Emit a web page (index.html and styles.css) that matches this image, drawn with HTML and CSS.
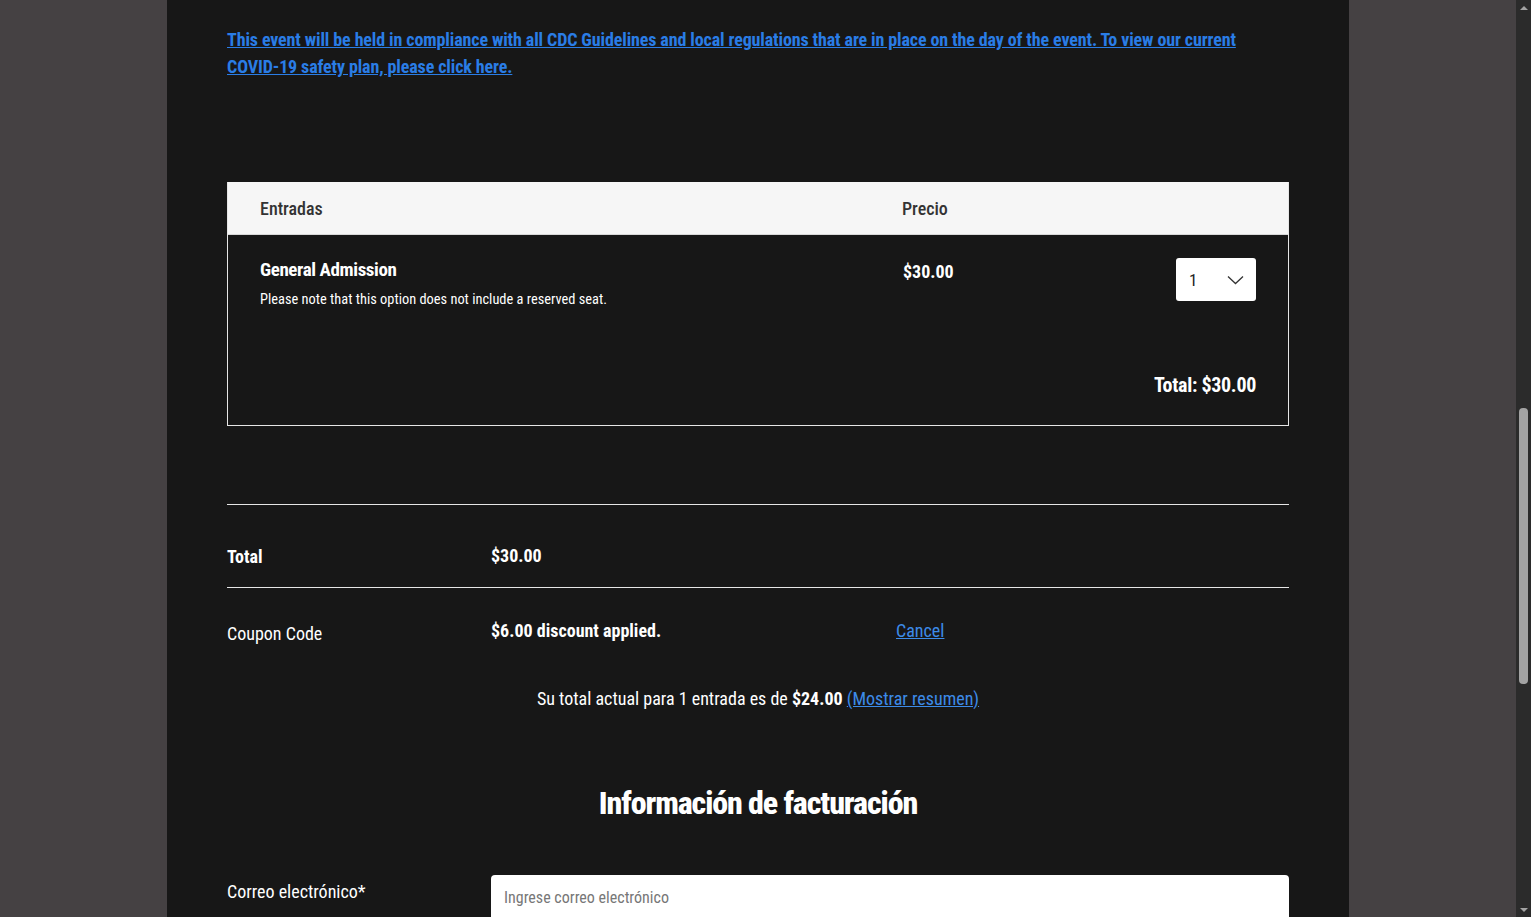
FILE: index.html
```html
<!DOCTYPE html>
<html lang="es">
<head>
<meta charset="utf-8">
<title>Checkout</title>
<link rel="stylesheet" href="styles.css">
</head>
<body>
<div class="viewport">
  <main class="panel">
    <p class="notice"><a href="#">This event will be held in compliance with all CDC Guidelines and local regulations that are in place on the day of the event. To view our current COVID-19 safety plan, please click here.</a></p>

    <section class="tickets">
      <div class="tickets-head">
        <span>Entradas</span>
        <span>Precio</span>
        <span></span>
      </div>
      <div class="ticket-row">
        <div class="ticket-info">
          <div class="ticket-name">General Admission</div>
          <div class="ticket-desc">Please note that this option does not include a reserved seat.</div>
        </div>
        <div class="ticket-price">$30.00</div>
        <div class="qty">
          <span>1</span>
          <svg class="chev" width="17" height="10" viewBox="0 0 17 10"><polyline points="1,1.5 8.5,8.5 16,1.5" fill="none" stroke="#333" stroke-width="1.3"/></svg>
        </div>
      </div>
      <div class="ticket-total">Total: $30.00</div>
    </section>

    <div class="sum-row sum-total">
      <span class="sum-label strong">Total</span>
      <span class="sum-value strong">$30.00</span>
    </div>
    <div class="sum-row sum-coupon">
      <span class="sum-label">Coupon Code</span>
      <span class="sum-value strong">$6.00 discount applied.</span>
      <a href="#" class="cancel">Cancel</a>
    </div>
    <p class="current">Su total actual para 1 entrada es de <b>$24.00</b> <a href="#">(Mostrar resumen)</a></p>

    <h2 class="billing">Información de facturación</h2>

    <div class="field">
      <label class="field-label">Correo electrónico*</label>
      <div class="input">Ingrese correo electrónico</div>
    </div>
  </main>
</div>
<div class="scrollbar">
  <div class="arrow up"></div>
  <div class="track"><div class="thumb"></div></div>
  <div class="arrow down"></div>
</div>
</body>
</html>
```

FILE: styles.css
```css
html, body {
  margin: 0;
  height: 917px;
  overflow: hidden;
}
body {
  display: flex;
  background: #454143;
  font-family: "Roboto Condensed", "Liberation Sans Narrow", "Roboto", sans-serif;
  font-stretch: condensed;
  color: #fff;
}
.viewport {
  flex: 1;
  display: flex;
  padding-left: 167px;
}
.panel {
  width: 1062px;
  flex-shrink: 0;
  background: #171717;
  padding: 26px 60px 0 60px;
  font-size: 18px;
}
.notice {
  margin: 0;
  font-size: 18px;
  line-height: 27px;
  font-weight: 700;
  letter-spacing: -0.12px;
}
.notice a {
  color: #2a7de6;
  text-decoration: underline;
}
.tickets {
  margin-top: 102px;
  border: 1px solid #e6e6e6;
  border-top: 0;
}
.tickets-head {
  display: grid;
  grid-template-columns: 642px 1fr 80px;
  align-items: center;
  height: 52px;
  padding: 0 32px;
  background: #f6f6f6;
  color: #333;
  font-size: 18px;
  font-weight: 500;
  border-bottom: 1px solid #d8d8d8;
}
.ticket-row {
  display: grid;
  grid-template-columns: 642px 1fr 80px;
  padding: 23px 32px 0 32px;
  align-items: start;
}
.ticket-name {
  font-size: 19px;
  font-weight: 700;
  line-height: 24px;
  letter-spacing: -0.4px;
}
.ticket-desc {
  font-size: 14.4px;
  line-height: 18px;
  margin-top: 9px;
}
.ticket-price {
  font-weight: 700;
  font-size: 18px;
  line-height: 24px;
  padding-top: 2px;
  padding-left: 1px;
}
.qty {
  height: 43px;
  background: #fff;
  border-radius: 3px;
  display: flex;
  align-items: center;
  justify-content: space-between;
  padding: 0 12px 0 13px;
  color: #222;
  font-size: 17px;
}
.chev { display: block; }
.ticket-total {
  text-align: right;
  padding: 63px 32px 27px 0;
  font-size: 20px;
  font-weight: 700;
  line-height: 26px;
  letter-spacing: -0.3px;
}
.sum-row {
  display: grid;
  grid-template-columns: 264px 405px 1fr;
  align-items: start;
}
.sum-total {
  margin-top: 78px;
  border-top: 1px solid #e6e6e6;
  border-bottom: 1px solid #e6e6e6;
  height: 84px;
  box-sizing: border-box;
  padding-top: 41px;
}
.sum-total .sum-value { margin-top: -1px; }
.sum-coupon {
  padding-top: 32px;
  height: 24px;
}
.sum-coupon .sum-label { margin-top: 3px; }
.strong { font-weight: 700; }
.cancel {
  color: #3d8be8;
  text-decoration: underline;
}
.current {
  margin: 0;
  text-align: center;
  line-height: 24px;
  padding-top: 43px;
}
.current a { color: #3d8be8; text-decoration: underline; }
.billing {
  margin: 0;
  text-align: center;
  font-size: 32px;
  font-weight: 800;
  line-height: 40px;
  letter-spacing: -1.1px;
  padding-top: 72px;
}
.field {
  display: grid;
  grid-template-columns: 264px 1fr;
  margin-top: 52px;
}
.field-label {
  font-size: 18px;
  padding-top: 6px;
}
.input {
  background: #fff;
  border-radius: 4px;
  height: 48px;
  color: #777;
  font-size: 16px;
  padding: 13px 13px 0;
  box-sizing: border-box;
}
.scrollbar {
  width: 15px;
  flex-shrink: 0;
  background: #2b2b2b;
  display: flex;
  flex-direction: column;
}
.arrow {
  height: 15px;
  display: flex;
  justify-content: center;
  align-items: center;
}
.arrow::before {
  content: "";
  border-left: 4px solid transparent;
  border-right: 4px solid transparent;
}
.arrow.up::before { border-bottom: 4px solid #a3a3a3; }
.arrow.down::before { border-top: 4px solid #a3a3a3; }
.track {
  flex: 1;
  padding-top: 393px;
}
.thumb {
  width: 9px;
  margin-left: 3px;
  height: 276px;
  background: #a3a3a3;
  border-radius: 4px;
}
```
